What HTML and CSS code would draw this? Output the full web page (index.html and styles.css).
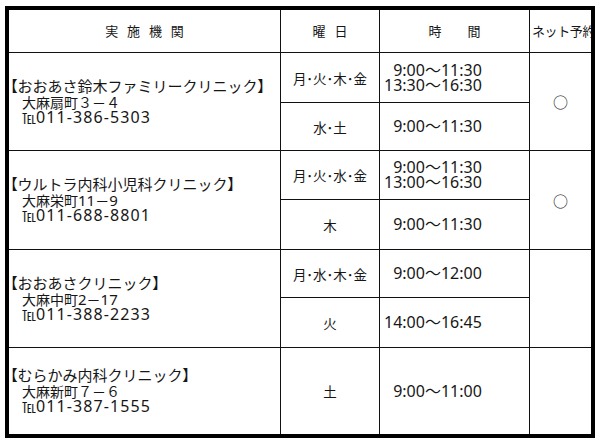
FILE: index.html
```html
<!DOCTYPE html>
<html lang="ja">
<head>
<meta charset="utf-8">
<title>実施機関</title>
<link rel="stylesheet" href="styles.css">
</head>
<body>
<div class="frame">
<table class="sched">
  <colgroup><col class="c1"><col class="c2"><col class="c3"><col class="c4"></colgroup>
  <tr class="r-head">
    <th class="th-org">実 施 機 関</th>
    <th class="th-day">曜 日</th>
    <th class="th-time">時　　間</th>
    <th class="th-net">ネット予約</th>
  </tr>
  <tr class="r50">
    <td rowspan="2" class="org">
      <div class="name"><span class="br">【</span>おおあさ鈴木ファミリークリニック<span class="br">】</span></div>
      <div class="addr">大麻扇町３－４</div>
      <div class="addr tel"><span class="tl">℡</span><span class="num">011-386-5303</span></div>
    </td>
    <td class="day">月･火･木･金</td>
    <td class="time"><div>&#8199;9:00～11:30</div><div>13:30～16:30</div></td>
    <td rowspan="2" class="net">○</td>
  </tr>
  <tr class="r48">
    <td class="day">水･土</td>
    <td class="time">&#8199;9:00～11:30</td>
  </tr>
  <tr class="r49">
    <td rowspan="2" class="org">
      <div class="name"><span class="br">【</span>ウルトラ内科小児科クリニック<span class="br">】</span></div>
      <div class="addr">大麻栄町<span class="dig">11</span>－<span class="dig">9</span></div>
      <div class="addr tel"><span class="tl">℡</span><span class="num">011-688-8801</span></div>
    </td>
    <td class="day">月･火･水･金</td>
    <td class="time"><div>&#8199;9:00～11:30</div><div>13:00～16:30</div></td>
    <td rowspan="2" class="net">○</td>
  </tr>
  <tr class="r50">
    <td class="day">木</td>
    <td class="time">&#8199;9:00～11:30</td>
  </tr>
  <tr class="r48">
    <td rowspan="2" class="org">
      <div class="name"><span class="br">【</span>おおあさクリニック<span class="br">】</span></div>
      <div class="addr">大麻中町<span class="dig">2</span>－<span class="dig">17</span></div>
      <div class="addr tel"><span class="tl">℡</span><span class="num">011-388-2233</span></div>
    </td>
    <td class="day">月･水･木･金</td>
    <td class="time">&#8199;9:00～12:00</td>
    <td rowspan="2" class="net"></td>
  </tr>
  <tr class="r50">
    <td class="day">火</td>
    <td class="time">14:00～16:45</td>
  </tr>
  <tr class="r86 last">
    <td class="org">
      <div class="name"><span class="br">【</span>むらかみ内科クリニック<span class="br">】</span></div>
      <div class="addr">大麻新町７－６</div>
      <div class="addr tel"><span class="tl">℡</span><span class="num">011-387-1555</span></div>
    </td>
    <td class="day">土</td>
    <td class="time">&#8199;9:00～11:00</td>
    <td class="net"></td>
  </tr>
</table>
</div>
</body>
</html>
```
FILE: styles.css
```css
html, body {
  margin: 0;
  padding: 0;
  background: #fff;
}
body {
  font-family: "Noto Sans", "Noto Sans CJK JP", sans-serif;
  color: #161616;
}
.frame {
  width: 582px;
  border: 4px solid #000;
  margin: 6px 0 0 5px;
}
.sched {
  width: 582px;
  table-layout: fixed;
  border-collapse: separate;
  border-spacing: 0;
}
.c1 { width: 272px; }
.c2 { width: 99px; }
.c3 { width: 150px; }
.c4 { width: 61px; }

.sched th,
.sched td {
  padding: 0;
  border-right: 1px solid #111;
  border-bottom: 1px solid #111;
  vertical-align: middle;
  font-weight: normal;
}
.sched .th-net,
.sched .net {
  border-right: none;
}
.sched .last td {
  border-bottom: none;
}

.r-head { height: 43px; }
.r50 { height: 50px; }
.r49 { height: 49px; }
.r48 { height: 48px; }
.r86 { height: 86px; }

.sched th {
  font-family: "Noto Sans CJK JP", sans-serif;
  font-size: 13px;
  line-height: 16px;
  text-align: center;
  white-space: nowrap;
}
.th-org,
.th-day {
  word-spacing: 6px;
}
.sched .th-net {
  text-align: left;
  padding-left: 2px;
  overflow: hidden;
  letter-spacing: -0.4px;
}

.sched .org {
  padding-left: 1px;
  padding-bottom: 3px;
}
.name {
  font-family: "Noto Sans CJK JP", sans-serif;
  font-size: 15px;
  line-height: 19px;
  white-space: nowrap;
}
.br {
  font-feature-settings: "palt";
}
.addr {
  font-size: 14px;
  line-height: 15px;
  padding-left: 12px;
  white-space: nowrap;
}
.dig {
  font-size: 15px;
}
.tl {
  font-family: "Noto Sans CJK JP", sans-serif;
  font-size: 14px;
}
.tel .num {
  font-size: 16px;
  letter-spacing: 1.1px;
}

.day {
  font-family: "Noto Sans CJK JP", sans-serif;
  font-size: 13.5px;
  text-align: center;
  white-space: nowrap;
}
.sched .time {
  font-size: 16px;
  line-height: 15px;
  padding-left: 4px;
  white-space: nowrap;
}
.net {
  font-family: "Noto Sans CJK JP", sans-serif;
  font-size: 15px;
  text-align: center;
  color: #222;
}
```
